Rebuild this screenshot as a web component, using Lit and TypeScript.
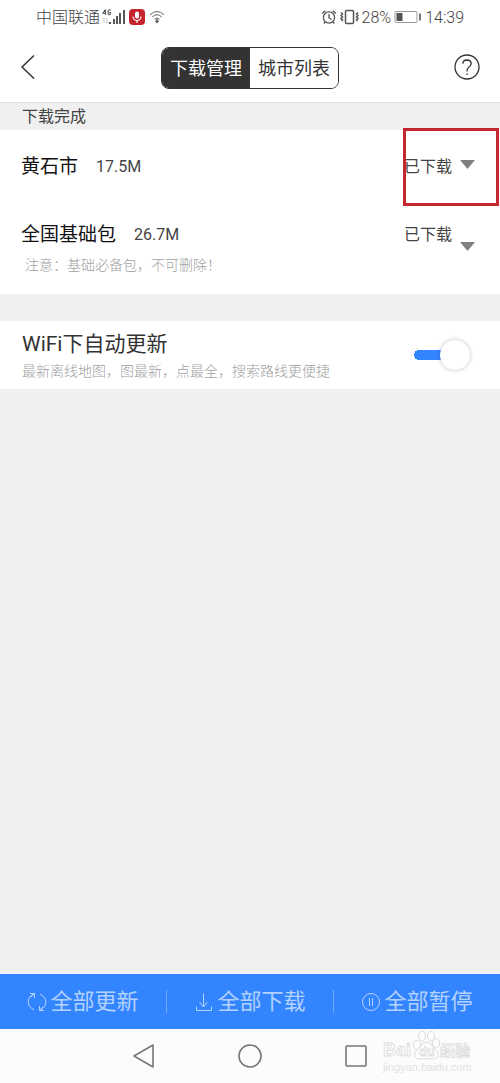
import { LitElement, html, css, svg } from "lit";
import { customElement, property, state } from "lit/decorators.js";

const signal = svg`
  <svg width="23" height="16" viewBox="0 0 23 16" fill="#555">
    <path d="M3.4 0.5 L0.8 4.3 H4.2 M3.4 0.5 V6 M8.5 1.5 Q8 .6 7 .8 Q6 1 6 3.3 Q6 5.7 7.2 5.7 Q8.5 5.7 8.5 3.5 H7.2" fill="none" stroke="#555" stroke-width="1.1"/>
    <path d="M2 9v5M1 10l1-1.200 1 1.200M5 9v5M4 13l1 1.200 1-1.200" fill="none" stroke="#bbb" stroke-width=".8"/>
    <rect x="7" y="13" width="2" height="2"/><rect x="11" y="10" width="2" height="5"/>
    <rect x="14" y="7" width="2" height="8"/><rect x="17" y="4" width="2" height="11"/><rect x="21" y="1" width="2" height="14"/>
  </svg>`;
const mic = svg`
  <svg width="16" height="16" viewBox="0 0 16 16">
    <rect width="16" height="16" rx="4" fill="#c4242b"/>
    <rect x="6" y="2.500" width="4" height="7" rx="2" fill="#fff"/>
    <path d="M4 7.500a4 4 0 0 0 8 0M8 11.500V14" fill="none" stroke="#fff" stroke-width="1.200"/>
  </svg>`;
const wifi = svg`
  <svg width="16" height="14" viewBox="0 0 16 14" fill="none" stroke="#666" stroke-width="1">
    <path d="M1 4.800Q8-1.800 15 4.800M3.200 7Q8 2.600 12.800 7M5.400 9.200Q8 7 10.600 9.200"/>
    <path d="M8 8.500L10 11.500L8 13.500L6 11.500Z" fill="#666" stroke="none"/>
  </svg>`;
const alarm = svg`
  <svg width="16" height="16" viewBox="0 0 16 16" fill="none" stroke="#555" stroke-width="1.300">
    <circle cx="8" cy="8.500" r="5.600"/><path d="M8 5v4l2.500 1.500M1.200 4.500L4.300 1.700M14.800 4.500L11.700 1.700M4 13l-1.200 1.500M12 13l1.200 1.500"/>
  </svg>`;
const vibrate = svg`
  <svg width="19" height="16" viewBox="0 0 19 16" fill="none" stroke="#555" stroke-width="1.500">
    <rect x="5.500" y="1.500" width="8" height="13" rx="1"/>
    <path d="M1 3.500l1.500 1.500-1.500 1.500 1.500 1.500-1.500 1.500 1.500 1.500-1 1M18 3.500l-1.500 1.500 1.500 1.500-1.500 1.500 1.500 1.500-1.500 1.500 1 1"/>
  </svg>`;
const battery = svg`
  <svg width="28" height="14" viewBox="0 0 28 14">
    <rect x="1" y="1.500" width="22" height="11" rx="1" fill="none" stroke="#999"/>
    <rect x="2.500" y="3" width="6" height="8" fill="#555"/><rect x="25" y="3.500" width="2" height="7" fill="#777"/>
  </svg>`;
const refresh = svg`
  <svg width="20" height="20" viewBox="0 0 20 20" fill="none" stroke="currentColor" stroke-width="1">
    <path d="M7 17.800Q1 15 1.200 9.500Q1.500 4.500 7 1.800M3 1.500H7.500V6M13 2.200Q19 5 18.800 10.500Q18.500 15.500 13 18.200M17 18.500H12.500V14M12.500 18.500L16 15M7.500 1.500L4 5"/>
  </svg>`;
const download = svg`
  <svg width="20" height="20" viewBox="0 0 20 20" fill="none" stroke="currentColor" stroke-width="1">
    <path d="M9.500 1.500V15L5.500 10M9.500 15L13.500 10M2.500 14.500V18.500H17.500V14.500"/>
  </svg>`;
const pause = svg`
  <svg width="20" height="20" viewBox="0 0 20 20" fill="none" stroke="currentColor" stroke-width="1">
    <circle cx="10" cy="10" r="8.500"/><path d="M8.500 6v8M11.500 6v8"/>
  </svg>`;

@customElement("status-bar")
class StatusBar extends LitElement {
  static styles = css`
    :host { display: flex; justify-content: space-between; align-items: center; height: 34px; padding: 0 36px; color: #444; font-size: 16px; font-weight: 300; line-height: 24px; }
    .group { display: flex; align-items: center; }
    .signals { gap: 4px; }
    .carrier { margin-right: -2px; }
    .system { gap: 3px; }
    span { padding-top: 1px; }
    svg { display: block; }
  `;
  render() {
    return html`
      <div class="group signals"><span class="carrier">中国联通</span>${signal}${mic}${wifi}</div>
      <div class="group system">${alarm}${vibrate}<span>28%</span>${battery}<span>14:39</span></div>`;
  }
}

@customElement("package-row")
class PackageRow extends LitElement {
  @property() name = "";
  @property() size = "";
  @property() note = "";
  @property({ type: Boolean }) marked = false;

  static styles = css`
    :host { display: block; }
    .row { position: relative; display: flex; justify-content: space-between; padding: 23px 25px 13px 21px; }
    .title { display: flex; align-items: center; gap: 18px; line-height: 28px; }
    .name { font-size: 19px; color: #111; }
    .size { font-size: 16px; color: #444; }
    .note { margin: 0; padding-left: 4px; font-size: 14px; font-weight: 300; line-height: 32px; color: #a0a0a0; }
    .state { display: flex; align-items: flex-start; gap: 8px; align-self: flex-start; padding: 0; border: 0; background: none; font: inherit; font-size: 16px; line-height: 28px; color: #444; cursor: pointer; }
    .arrow { width: 15px; height: 9px; padding-top: 7px; }
    .noted .arrow { padding-top: 21px; }
    .frame { position: absolute; top: -2px; right: 1px; width: 90px; height: 72px; border: 3px solid #c3272f; pointer-events: none; }
  `;
  render() {
    return html`
      <div class="row">
        <div>
          <div class="title"><span class="name">${this.name}</span><span class="size">${this.size}</span></div>
          ${this.note ? html`<p class="note">${this.note}</p>` : ""}
        </div>
        <button class="state ${this.note ? "noted" : ""}">
          <span>已下载</span>
          <svg class="arrow" viewBox="0 0 15 9"><path d="M0 0H15L7.500 9Z" fill="#808080"/></svg>
        </button>
        ${this.marked ? html`<div class="frame"></div>` : ""}
      </div>`;
  }
}

@customElement("app-root")
class AppRoot extends LitElement {
  @state() private autoUpdate = true;

  static styles = css`
    :host { display: flex; flex-direction: column; min-height: 100vh; background: #f0f0f0; font-family: Roboto, "Noto Sans CJK SC", sans-serif; color: #333; }
    button { font-family: inherit; cursor: pointer; }
    svg { display: block; }
    .top { background: #fff; border-bottom: 1px solid #e2e2e2; }
    .header { display: grid; grid-template-columns: 1fr auto 1fr; align-items: center; padding: 13px 20px; }
    .icon { padding: 0; border: 0; background: none; }
    .header .icon { padding-bottom: 2px; }
    .help { justify-self: end; }
    .tabs { display: flex; border: 1px solid #333; border-radius: 8px; overflow: hidden; }
    .tab { padding: 2px 8px 0; border: 0; background: #fff; color: #333; font-size: 18px; line-height: 38px; }
    .tab.active { background: #333; color: #fff; }
    .section { margin: 0; padding: 0 22px; font-size: 16px; line-height: 27px; font-weight: 400; color: #444; }
    .card { background: #fff; }
    .packages { display: grid; gap: 4px; }
    .setting { display: flex; justify-content: space-between; align-items: center; margin-top: 27px; padding: 7px 30px 7px 22px; }
    .setting-name { display: block; font-size: 21px; line-height: 32px; }
    .hint { margin: 0; font-size: 14px; font-weight: 300; line-height: 22px; color: #a0a0a0; }
    .switch { appearance: none; display: flex; align-items: center; width: 56px; height: 30px; margin: 0; background: linear-gradient(#3385ff, #3385ff) 5px center / 40px 10px no-repeat, radial-gradient(circle at 5px 15px, #3385ff 5px, transparent 5px); border-radius: 15px; cursor: pointer; }
    .switch::before { content: ""; width: 30px; height: 30px; border-radius: 50%; background: #fff; box-shadow: 0 0 4px rgba(0, 0, 0, 0.25); }
    .switch:checked { justify-content: flex-end; }
    .actions { display: flex; align-items: center; margin-top: auto; height: 55px; background: #3385ff; }
    .action { flex: 1; display: flex; justify-content: center; align-items: center; gap: 3px; padding: 0; border: 0; background: none; color: #b3d2ff; font-size: 22px; line-height: 22px; }
    .action span { padding-top: 1px; }
    .action + .action { border-left: 1px solid #70a9ff; }
    .nav { position: relative; display: flex; justify-content: center; align-items: center; gap: 82px; height: 54px; background: #fcfcfc; }
    .mark { position: absolute; right: 20px; bottom: 10px; width: 104px; height: 48px; }
  `;

  render() {
    return html`
      <div class="top">
        <status-bar></status-bar>
        <header class="header">
          <button class="icon" aria-label="返回">
            <svg width="16" height="26" viewBox="0 0 16 26" fill="none" stroke="#333" stroke-width="1.500"><path d="M14 1.500L2 13L14 24.500"/></svg>
          </button>
          <div class="tabs"><button class="tab active">下载管理</button><button class="tab">城市列表</button></div>
          <button class="icon help" aria-label="帮助">
            <svg width="26" height="26" viewBox="0 0 26 26" fill="none" stroke="#333" stroke-width="1.300">
              <circle cx="13" cy="13" r="12"/><path d="M8.800 9.800Q9 6 13 6Q17.200 6.200 17.200 9.800Q17 12 14.500 13.500Q13 14.500 13 17.500M13 19.500v1.500"/>
            </svg>
          </button>
        </header>
      </div>
      <h2 class="section">下载完成</h2>
      <div class="card packages">
        <package-row name="黄石市" size="17.5M" marked></package-row>
        <package-row name="全国基础包" size="26.7M" note="注意：基础必备包，不可删除！"></package-row>
      </div>
      <div class="card setting">
        <div>
          <label class="setting-name" for="auto">WiFi下自动更新</label>
          <p class="hint">最新离线地图，图最新，点最全，搜索路线更便捷</p>
        </div>
        <input class="switch" id="auto" type="checkbox" .checked=${this.autoUpdate}
          @change=${(e: Event) => (this.autoUpdate = (e.target as HTMLInputElement).checked)} />
      </div>
      <div class="actions">
        <button class="action">${refresh}<span>全部更新</span></button>
        <button class="action">${download}<span>全部下载</span></button>
        <button class="action">${pause}<span>全部暂停</span></button>
      </div>
      <nav class="nav">
        <button class="icon" aria-label="后退"><svg width="24" height="24" viewBox="0 0 24 24" fill="none" stroke="#777" stroke-width="1.600" stroke-linejoin="round"><path d="M21 1V23L2 12Z"/></svg></button>
        <button class="icon" aria-label="主页"><svg width="24" height="24" viewBox="0 0 24 24" fill="none" stroke="#777" stroke-width="1.600"><circle cx="12" cy="12" r="11"/></svg></button>
        <button class="icon" aria-label="最近任务"><svg width="24" height="24" viewBox="0 0 24 24" fill="none" stroke="#777" stroke-width="1.600"><rect x="2" y="2" width="20" height="20" rx="1"/></svg></button>
        <svg class="mark" viewBox="0 0 104 48" fill="#fff" stroke="#dcdcdc" stroke-width="1">
          <g fill-opacity=".35">
            <ellipse cx="41" cy="20" rx="3.500" ry="4.500"/><ellipse cx="46" cy="11" rx="3.500" ry="5"/>
            <ellipse cx="55" cy="11" rx="3.500" ry="5"/><ellipse cx="60" cy="18" rx="3.500" ry="4.500"/>
            <path d="M51 17Q55 17 57 22Q64 27 62 32Q60 35 51 33.500Q41 35 39 32Q37 27 44 22Q47 17 51 17Z"/>
          </g>
          <g stroke-width=".8">
            <text x="7" y="31" font-family="Liberation Sans" font-weight="700" font-size="18">Bai</text>
            <text x="43" y="31" font-family="Liberation Sans" font-weight="700" font-size="13">du</text>
            <text x="64" y="31" font-family="Noto Sans CJK SC" font-weight="700" font-size="15">经验</text>
          </g>
          <text x="7" y="46" font-family="Liberation Sans" font-size="11" fill="#e2e2e2" stroke="none">jingyan.baidu.com</text>
        </svg>
      </nav>`;
  }
}
